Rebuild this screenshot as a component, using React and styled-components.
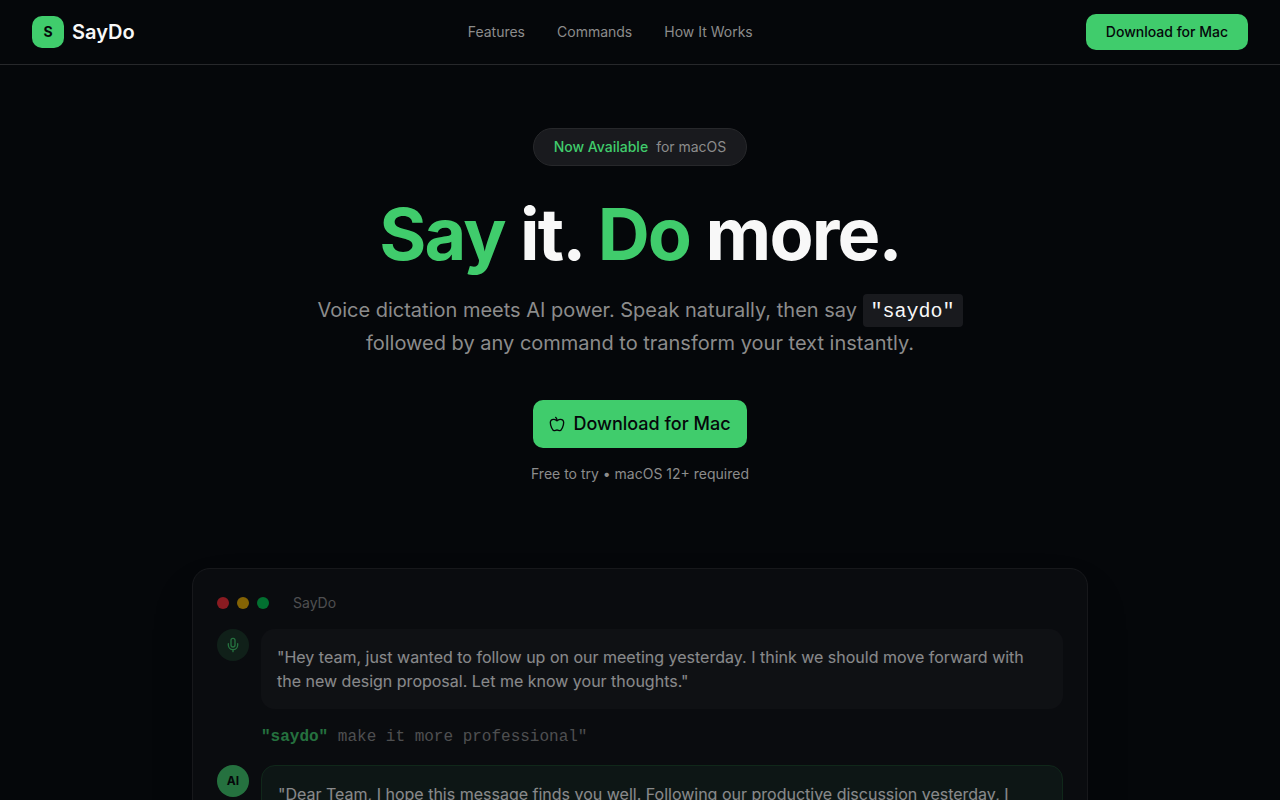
import React from "react";
import styled, { createGlobalStyle } from "styled-components";
import { Mic } from "lucide-react";

const green = "#40cc6c";
const ink = "#05070a";
const muted = "#8c8c8c";
const line = "#27282b";
const mono = `"Liberation Mono", monospace`;

const GlobalStyle = createGlobalStyle`
  *, *::before, *::after { box-sizing: border-box; }
  body {
    margin: 0;
    background: ${ink};
    color: #f8f8f8;
    font-family: Inter, "Liberation Sans", sans-serif;
    font-size: 16px;
    line-height: 24px;
  }
  h1, p { margin: 0; }
`;

const Header = styled.header`
  display: flex;
  align-items: center;
  justify-content: space-between;
  padding: 14px 32px;
  border-bottom: 1px solid ${line};
`;

const Brand = styled.a`
  display: flex;
  align-items: center;
  gap: 8px;
  color: inherit;
  text-decoration: none;
  font-size: 20px;
  line-height: 28px;
  font-weight: 600;
`;

const LogoMark = styled.span`
  display: flex;
  align-items: center;
  justify-content: center;
  width: 32px;
  height: 32px;
  border-radius: 10px;
  background: ${green};
  color: ${ink};
  font-size: 14px;
  line-height: 20px;
  font-weight: 700;
`;

const Nav = styled.nav`
  display: flex;
  gap: 32px;
`;

const NavLink = styled.a`
  color: ${muted};
  text-decoration: none;
  font-size: 14px;
  line-height: 20px;
`;

const Button = styled.button`
  display: inline-flex;
  align-items: center;
  justify-content: center;
  gap: 8px;
  border: 0;
  border-radius: 10px;
  padding: ${(p) => (p.$large ? "10px 16px" : "8px 20px")};
  background: ${green};
  color: ${ink};
  font-family: inherit;
  font-size: ${(p) => (p.$large ? "18px" : "14px")};
  line-height: ${(p) => (p.$large ? "28px" : "20px")};
  font-weight: 500;
  cursor: pointer;
`;

const Hero = styled.section`
  display: flex;
  flex-direction: column;
  align-items: center;
  padding: 63px 32px 84px;
  text-align: center;
`;

const Pill = styled.div`
  display: flex;
  gap: 8px;
  padding: 8px 20px;
  border: 1px solid ${line};
  border-radius: 19px;
  background: #191a1e;
  color: ${muted};
  font-size: 14px;
  line-height: 20px;
`;

const PillLead = styled.span`
  color: ${green};
  font-weight: 500;
`;

const Title = styled.h1`
  margin: 32px 0 24px;
  font-size: 72px;
  line-height: 72px;
  font-weight: 700;
  letter-spacing: -0.025em;
`;

const Accent = styled.span`
  color: ${green};
`;

const Lead = styled.p`
  max-width: 672px;
  margin-bottom: 40px;
  color: ${muted};
  font-size: 20px;
  line-height: 33px;
`;

const Keyword = styled.code`
  padding: 6px 8px 4px;
  border-radius: 4px;
  background: #191a1e;
  color: #f8f8f8;
  font-family: ${mono};
  font-size: 20px;
  line-height: 20px;
`;

const Note = styled.p`
  margin-top: 16px;
  color: ${muted};
  font-size: 14px;
  line-height: 20px;
`;

const Demo = styled.section`
  max-width: 960px;
  margin: 0 auto;
  padding: 0 32px 64px;
`;

const Window = styled.div`
  display: flex;
  flex-direction: column;
  gap: 16px;
  padding: 24px;
  border: 1px solid ${line};
  border-radius: 18px;
  background: #101115;
  box-shadow: 0 25px 50px -12px rgba(0, 0, 0, 0.25);
  opacity: 0.54;
`;

const TitleBar = styled.div`
  display: flex;
  align-items: center;
  gap: 8px;
  color: ${muted};
  font-size: 14px;
  line-height: 20px;
`;

const Dot = styled.span`
  width: 12px;
  height: 12px;
  border-radius: 50%;
  background: ${(p) => p.$color};
`;

const WindowName = styled.span`
  margin-left: 16px;
`;

const Message = styled.div`
  display: flex;
  align-items: flex-start;
  gap: 12px;
`;

const Avatar = styled.span`
  display: flex;
  flex-shrink: 0;
  align-items: center;
  justify-content: center;
  width: 32px;
  height: 32px;
  border-radius: 50%;
  background: ${(p) => (p.$solid ? green : "#1a3626")};
  color: ${(p) => (p.$solid ? ink : green)};
  font-size: 12px;
  line-height: 16px;
  font-weight: 700;
`;

const Bubble = styled.p`
  flex: 1;
  padding: 16px;
  border: ${(p) => (p.$reply ? "1px solid #1a4429" : "0")};
  border-radius: 14px;
  background: ${(p) => (p.$reply ? "#15231f" : "#191a1e")};
`;

const Command = styled.p`
  padding-left: 44px;
  color: ${muted};
  font-family: ${mono};
`;

const Trigger = styled.span`
  color: ${green};
  font-weight: 700;
`;

function AppleIcon() {
  return (
    <svg
      width="16"
      height="16"
      viewBox="0 0 24 24"
      fill="none"
      stroke="currentColor"
      strokeWidth="2"
      strokeLinecap="round"
      strokeLinejoin="round"
      aria-hidden="true"
    >
      <path d="M12 20.94c1.5 0 2.75 1.06 4 1.06 3 0 6-8 6-12.22A4.91 4.91 0 0 0 17 5c-2.22 0-4 1.44-5 2-1-.56-2.78-2-5-2a4.9 4.9 0 0 0-5 4.78C2 14 5 22 8 22c1.25 0 2.5-1.06 4-1.06Z" />
      <path d="M10 2c1 .5 2 2 2 5" />
    </svg>
  );
}

export default function App() {
  return (
    <>
      <GlobalStyle />
      <Header>
        <Brand href="#">
          <LogoMark>S</LogoMark>
          SayDo
        </Brand>
        <Nav>
          <NavLink href="#features">Features</NavLink>
          <NavLink href="#commands">Commands</NavLink>
          <NavLink href="#how-it-works">How It Works</NavLink>
        </Nav>
        <Button type="button">Download for Mac</Button>
      </Header>
      <main>
        <Hero>
          <Pill>
            <PillLead>Now Available</PillLead>
            <span>for macOS</span>
          </Pill>
          <Title>
            <Accent>Say</Accent> it. <Accent>Do</Accent> more.
          </Title>
          <Lead>
            Voice dictation meets AI power. Speak naturally, then say{" "}
            <Keyword>"saydo"</Keyword> followed by any command to transform your
            text instantly.
          </Lead>
          <Button type="button" $large>
            <AppleIcon />
            Download for Mac
          </Button>
          <Note>Free to try • macOS 12+ required</Note>
        </Hero>
        <Demo>
          <Window>
            <TitleBar>
              <Dot $color="#fb2c36" />
              <Dot $color="#f0b100" />
              <Dot $color="#00c951" />
              <WindowName>SayDo</WindowName>
            </TitleBar>
            <Message>
              <Avatar>
                <Mic size={16} aria-hidden="true" />
              </Avatar>
              <Bubble>
                "Hey team, just wanted to follow up on our meeting yesterday. I
                think we should move forward with the new design proposal. Let
                me know your thoughts."
              </Bubble>
            </Message>
            <Command>
              <Trigger>"saydo"</Trigger> make it more professional"
            </Command>
            <Message>
              <Avatar $solid>AI</Avatar>
              <Bubble $reply>
                "Dear Team, I hope this message finds you well. Following our
                productive discussion yesterday, I
              </Bubble>
            </Message>
          </Window>
        </Demo>
      </main>
    </>
  );
}
